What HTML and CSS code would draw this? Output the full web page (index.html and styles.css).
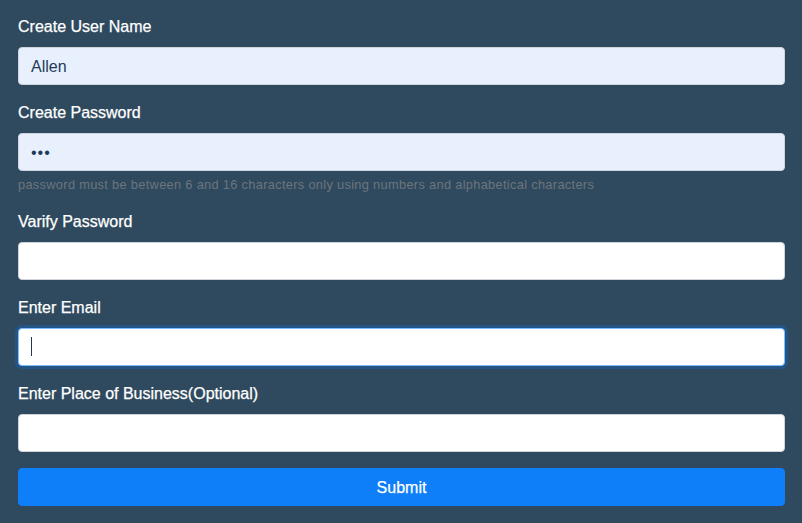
FILE: index.html
```html
<!DOCTYPE html>
<html lang="en">
<head>
<meta charset="utf-8">
<title>Register</title>
<link rel="stylesheet" href="styles.css">
</head>
<body>
<form class="form">
  <div class="group">
    <label class="label">Create User Name</label>
    <input class="input autofill" type="text" value="Allen">
  </div>
  <div class="group">
    <label class="label">Create Password</label>
    <input class="input autofill pw" type="password" value="abc">
    <small class="help">password must be between 6 and 16 characters only using numbers and alphabetical characters</small>
  </div>
  <div class="group">
    <label class="label">Varify Password</label>
    <input class="input" type="password">
  </div>
  <div class="group">
    <label class="label">Enter Email</label>
    <div class="field-wrap">
      <input class="input focused" type="email">
      <span class="caret"></span>
    </div>
  </div>
  <div class="group">
    <label class="label">Enter Place of Business(Optional)</label>
    <input class="input" type="text">
  </div>
  <button class="btn" type="button">Submit</button>
</form>
</body>
</html>
```

FILE: styles.css
```css
html, body {
  margin: 0;
  padding: 0;
  background: #2f4a5e;
}
body {
  font-family: "Liberation Sans", Arial, sans-serif;
  font-size: 16px;
  line-height: 1.5;
  color: #fff;
}
.form {
  padding: 15px 17px 17px 18px;
}
.group {
  margin-bottom: 16px;
  display: flex;
  flex-direction: column;
}
.label {
  display: block;
  margin-bottom: 8px;
  color: #fff;
  line-height: 24px;
  padding-top: 1px;
  margin-top: -1px;
  -webkit-text-stroke: 0.25px #fff;
}
.input {
  display: block;
  box-sizing: border-box;
  width: 100%;
  height: 38px;
  padding: 7px 12px 5px;
  font-family: inherit;
  font-size: 16px;
  line-height: 24px;
  color: #495057;
  background: #fff;
  border: 1px solid #ced4da;
  border-radius: 4px;
  outline: none;
  margin: 0;
}
.autofill {
  background: #e8f0fe;
  color: #1d3a58;
}
.pw {
  letter-spacing: 1px;
}
.focused {
  border-color: #80bdff;
  box-shadow: 0 0 0 3px rgba(0, 123, 255, 0.25);
}
.field-wrap {
  position: relative;
}
.caret {
  position: absolute;
  left: 13px;
  top: 9px;
  width: 1px;
  height: 19px;
  background: #1d3a58;
}
.help {
  display: block;
  margin-top: 4px;
  font-size: 12.8px;
  line-height: 19px;
  letter-spacing: 0.32px;
  color: #6c757d;
}
.btn {
  display: block;
  width: 100%;
  height: 38px;
  box-sizing: border-box;
  border: 1px solid #0f7ef9;
  background: #0f7ef9;
  color: #fff;
  font-family: inherit;
  font-size: 16px;
  line-height: 24px;
  border-radius: 4px;
  padding: 7px 12px 5px;
  -webkit-text-stroke: 0.25px #fff;
}
```
